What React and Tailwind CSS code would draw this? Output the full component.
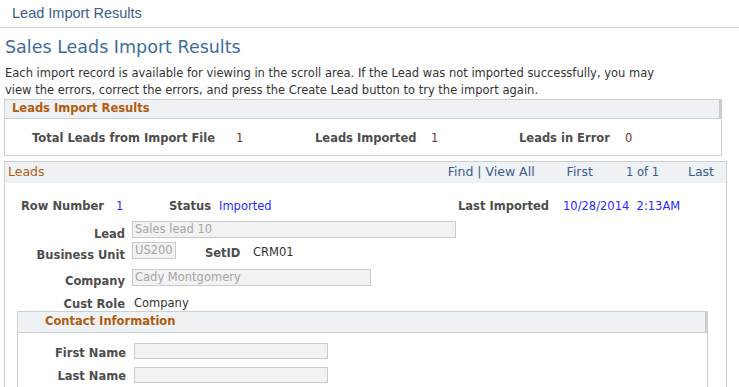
import React from "react";

const V = { fontFamily: '"DejaVu Sans", Verdana, sans-serif' };

function Label({ children, className = "" }) {
  return <span className={`font-bold text-[#4d4d4d] text-[11.5px] leading-[13px] ${className}`}>{children}</span>;
}

function Input({ value, className = "" }) {
  return (
    <div className={`border border-[#c8cbce] bg-[#f2f2f2] text-[11.5px] text-[#a6a6a6] leading-[14px] px-[2px] ${className}`}>
      {value}
    </div>
  );
}

export default function App() {
  return (
    <div className="w-[739px] h-[387px] bg-white overflow-hidden relative" style={V}>
      <div className="h-[28px] border-b border-[#cbcfd4] flex items-center pl-[12px]">
        <span className="text-[14.5px] text-[#3c5d8b]" style={{ fontFamily: '"Liberation Sans", Arial, sans-serif' }}>
          Lead Import Results
        </span>
      </div>
      <div className="pl-[5px] pt-[7px] text-[17.5px] leading-[24px] text-[#3f6c9d]">Sales Leads Import Results</div>
      <div className="pl-[5px] pt-[6px] text-[11.5px] leading-[17px] text-[#333]">
        <div>Each import record is available for viewing in the scroll area. If the Lead was not imported successfully, you may</div>
        <div>view the errors, correct the errors, and press the Create Lead button to try the import again.</div>
      </div>

      <div className="ml-[4px] mt-[0px] w-[718px] h-[57px] border border-[#cbcfd4] flex flex-col">
        <div className="h-[19px] bg-[#eef2f4] border-b border-[#cbcfd4] border-r-2 border-r-[#c8ccd1] pl-[7px] flex items-center">
          <span className="font-bold text-[11.5px] text-[#b35c10]">Leads Import Results</span>
        </div>
        <div className="flex items-center h-[36px] pt-[3px] text-[11.5px]">
          <Label className="ml-[27px] w-[204px]">Total Leads from Import File</Label>
          <span className="text-[#6b2f2f] w-[79px]">1</span>
          <Label className="w-[116px]">Leads Imported</Label>
          <span className="text-[#6b2f2f] w-[88px]">1</span>
          <Label className="w-[106px]">Leads in Error</Label>
          <span className="text-[#6b2f2f]">0</span>
        </div>
      </div>

      <div className="ml-[4px] mt-[5px] w-[723px] h-[240px] border border-b-0 border-[#cbcfd4] flex flex-col">
        <div className="h-[21px] bg-[#eef2f4] flex items-center pl-[3px] pr-[12px] text-[12.5px]">
          <span className="text-[#b35c10]">Leads</span>
          <span className="ml-auto text-[#3d5c8c]">Find | View All</span>
          <span className="ml-[32px] text-[#3d5c8c]">First</span>
          <span className="ml-[33px] text-[11.5px] text-[#3d5c8c]">1 of 1</span>
          <span className="ml-[29px] text-[#3d5c8c]">Last</span>
        </div>
        <div className="flex items-center h-[23px] mt-[12px]">
          <Label className="ml-[16px] w-[95px]">Row Number</Label>
          <span className="text-[11.5px] text-[#2a2aff] w-[53px]">1</span>
          <Label className="w-[50px]">Status</Label>
          <span className="text-[11.5px] text-[#2a2aff] w-[239px]">Imported</span>
          <Label className="w-[105px]">Last Imported</Label>
          <span className="text-[11.5px] text-[#2a2aff]">10/28/2014&nbsp;&nbsp;2:13AM</span>
        </div>
        <div className="flex items-start mt-[3px]">
          <Label className="w-[120px] text-right pt-[7px]">Lead</Label>
          <Input value="Sales lead 10" className="ml-[7px] w-[324px] h-[17px]" />
        </div>
        <div className="flex items-start mt-[1px]">
          <Label className="w-[120px] text-right pt-[7px]">Business Unit</Label>
          <Input value="US200" className="ml-[7px] w-[44px] h-[17px]" />
          <Label className="ml-[29px] w-[48px] pt-[5px]">SetID</Label>
          <span className="text-[11.5px] text-[#333] leading-[13px] pt-[4px]">CRM01</span>
        </div>
        <div className="flex items-start mt-[7px]">
          <Label className="w-[120px] text-right pt-[6px]">Company</Label>
          <Input value="Cady Montgomery" className="ml-[7px] w-[239px] h-[17px]" />
        </div>
        <div className="flex items-center mt-[9px] h-[14px]">
          <Label className="w-[120px] text-right">Cust Role</Label>
          <span className="ml-[9px] text-[11.5px] text-[#333]">Company</span>
        </div>
        <div className="ml-[12px] mt-[0px] w-[691px] flex-1 border border-b-0 border-[#cbcfd4] flex flex-col">
          <div className="h-[21px] bg-[#eef2f4] border-b border-[#cbcfd4] border-r-2 border-r-[#c8ccd1] pl-[27px] flex items-center">
            <span className="font-bold text-[11.5px] text-[#b35c10]">Contact Information</span>
          </div>
          <div className="flex items-start mt-[10px]">
            <Label className="w-[108px] text-right pt-[4px]">First Name</Label>
            <Input value="" className="ml-[8px] w-[194px] h-[16px]" />
          </div>
          <div className="flex items-start mt-[7px]">
            <Label className="w-[108px] text-right pt-[3px]">Last Name</Label>
            <Input value="" className="ml-[8px] w-[194px] h-[16px]" />
          </div>
        </div>
      </div>
    </div>
  );
}
